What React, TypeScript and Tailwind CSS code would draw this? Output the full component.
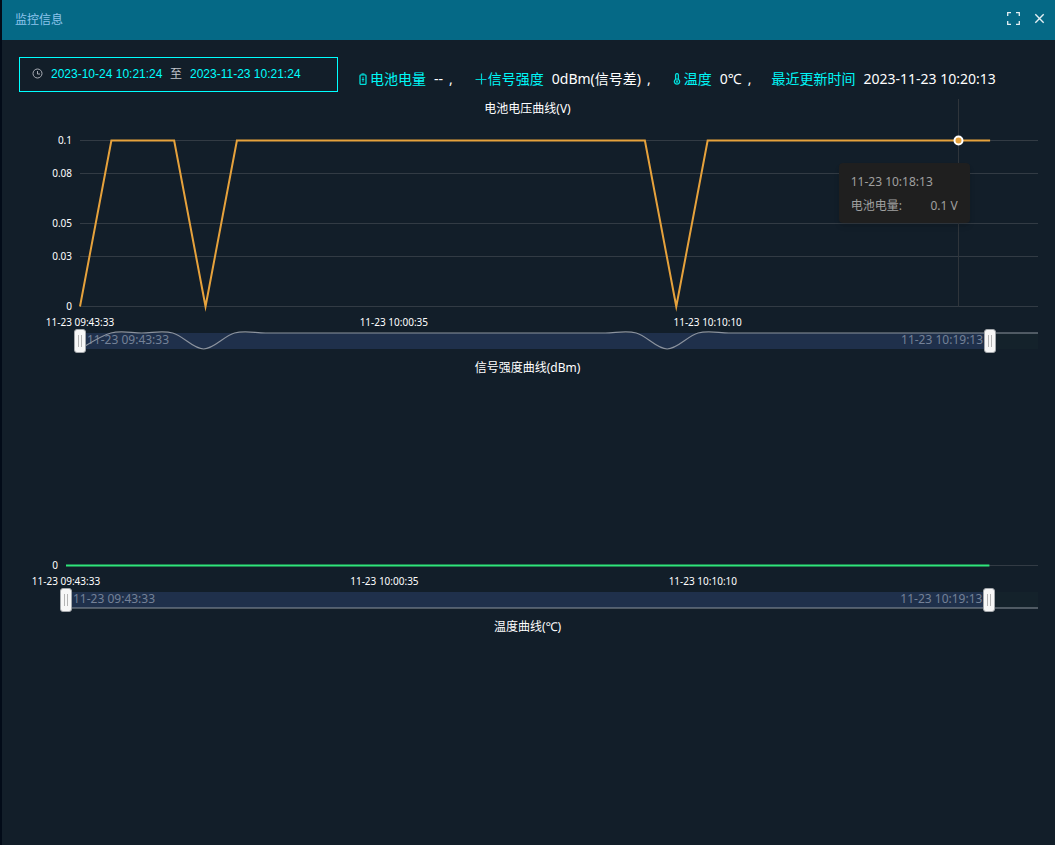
import { ReactNode, useEffect, useLayoutEffect, useRef, useState } from "react";
import clsx from "clsx";

interface ChartProps {
  title: string;
  color: string;
  values: number[];
  max: number;
  ticks: { value: number; label: string }[];
  gridLeft: number;
  hover?: { index: number; time: string; name: string; value: string };
}

const TOP = 21.5;
const BASE = 187.5;
const FONT = "font-['Noto_Sans','Noto_Sans_CJK_SC',sans-serif]";

const times: Record<number, string> = {
  0: "11-23 09:43:33",
  10: "11-23 10:00:35",
  20: "11-23 10:10:10",
};

const voltage = Array.from({ length: 32 }, (_, i) =>
  i === 0 || i === 4 || i === 19 ? 0 : 0.1,
);
const signal = Array.from({ length: 32 }, () => 0);

function smoothPath(points: [number, number][]) {
  return points.reduce((d, [x, y], i) => {
    if (i === 0) return `M${x} ${y}`;
    const [px, py] = points[i - 1];
    const before = points[i - 2] ?? points[i - 1];
    const after = points[i + 1] ?? points[i];
    const c1 = [px + (x - before[0]) / 6, py + (y - before[1]) / 6];
    const c2 = [x - (after[0] - px) / 6, y - (after[1] - py) / 6];
    return `${d} C${c1[0]} ${c1[1]} ${c2[0]} ${c2[1]} ${x} ${y}`;
  }, "");
}

function ZoomHandle({
  label,
  value,
  onChange,
}: {
  label: string;
  value: number;
  onChange: (value: number) => void;
}) {
  return (
    <input
      type="range"
      aria-label={label}
      min={0}
      max={100}
      value={value}
      onChange={(e) => onChange(Number(e.target.value))}
      className="pointer-events-none absolute inset-y-0 -left-1.5 h-6 w-[calc(100%+12px)] appearance-none bg-transparent outline-none [&::-webkit-slider-thumb]:pointer-events-auto [&::-webkit-slider-thumb]:h-6 [&::-webkit-slider-thumb]:w-3 [&::-webkit-slider-thumb]:cursor-ew-resize [&::-webkit-slider-thumb]:appearance-none [&::-webkit-slider-thumb]:rounded-[3px] [&::-webkit-slider-thumb]:border [&::-webkit-slider-thumb]:border-[#a3a7ab] [&::-webkit-slider-thumb]:bg-[#f7f7f7] [&::-webkit-slider-thumb]:bg-[linear-gradient(90deg,transparent_3px,#b4b4b4_3px,#b4b4b4_4px,transparent_4px,transparent_6px,#b4b4b4_6px,#b4b4b4_7px,transparent_7px)] [&::-webkit-slider-thumb]:bg-[length:10px_12px] [&::-webkit-slider-thumb]:bg-center [&::-webkit-slider-thumb]:bg-no-repeat"
    />
  );
}

function DataZoom({
  title,
  values,
  max,
  width,
}: {
  title: string;
  values: number[];
  max: number;
  width: number;
}) {
  const [start, setStart] = useState(0);
  const [end, setEnd] = useState(95);
  const points = values.map((v, i): [number, number] => [
    (i * width) / (values.length - 1),
    20 - (v / max) * 16,
  ]);

  return (
    <div className="relative h-6">
      <div className="absolute inset-x-0 top-1 h-4 bg-[#14222b]" />
      <div
        className="absolute top-1 flex h-4 items-center justify-between bg-[#1f304b] px-[7px] pb-0.5 text-xs leading-none text-[#748197]"
        style={{ left: `${start}%`, width: `${end - start}%` }}
      >
        <span>11-23 09:43:33</span>
        <span>11-23 10:19:13</span>
      </div>
      <svg className="absolute inset-0 h-6 w-full overflow-visible">
        <path
          d={smoothPath(points)}
          fill="none"
          stroke="#8c939e"
          strokeWidth="1.2"
        />
      </svg>
      <ZoomHandle
        label={`${title} 开始`}
        value={start}
        onChange={(v) => setStart(Math.min(v, end))}
      />
      <ZoomHandle
        label={`${title} 结束`}
        value={end}
        onChange={(v) => setEnd(Math.max(v, start))}
      />
    </div>
  );
}

function LineChart({
  title,
  color,
  values,
  max,
  ticks,
  gridLeft,
  hover,
}: ChartProps) {
  const ref = useRef<HTMLElement>(null);
  const [width, setWidth] = useState(0);

  useLayoutEffect(() => {
    if (ref.current) setWidth(ref.current.clientWidth);
  }, []);

  useEffect(() => {
    if (!ref.current) return;
    const observer = new ResizeObserver(([entry]) =>
      setWidth(entry.contentRect.width),
    );
    observer.observe(ref.current);
    return () => observer.disconnect();
  }, []);

  const plot = Math.max(width - gridLeft, 0);
  const x = (i: number) => gridLeft + (i * plot * 0.95) / 29;
  const y = (v: number) => BASE - (v / max) * (BASE - TOP);
  const line = values
    .slice(0, 30)
    .map((v, i) => `${x(i)},${y(v)}`)
    .join(" ");

  return (
    <section ref={ref} className="relative pb-[5px]">
      <h3 className="pr-0.5 text-center text-xs leading-5 text-white">
        {title}
      </h3>
      <svg className="block h-[210px] w-full overflow-visible">
        {ticks.map((t) => (
          <g key={t.value}>
            <line
              x1={gridLeft}
              x2={width}
              y1={Math.floor(y(t.value)) + 0.5}
              y2={Math.floor(y(t.value)) + 0.5}
              stroke="#323b44"
            />
            <text
              x={gridLeft - 8}
              y={y(t.value) + 3}
              textAnchor="end"
              className="fill-white text-[10px]"
            >
              {t.label}
            </text>
          </g>
        ))}
        {Object.entries(times).map(([i, label]) => (
          <text
            key={i}
            x={x(Number(i))}
            y={207}
            textAnchor="middle"
            className="fill-white text-[10px]"
          >
            {label}
          </text>
        ))}
        {hover && (
          <line
            x1={Math.floor(x(hover.index)) + 0.5}
            x2={Math.floor(x(hover.index)) + 0.5}
            y1={-20}
            y2={BASE}
            stroke="#2f353b"
          />
        )}
        <polyline
          points={line}
          fill="none"
          stroke={color}
          strokeWidth={2}
          strokeMiterlimit={10}
        />
        {hover && (
          <circle
            cx={Math.floor(x(hover.index)) + 0.5}
            cy={y(values[hover.index])}
            r={4}
            fill={color}
            stroke="#fff"
            strokeWidth={2}
          />
        )}
      </svg>
      <div style={{ marginLeft: gridLeft }}>
        <DataZoom title={title} values={values} max={max} width={plot} />
      </div>
      {hover && (
        <div
          className="absolute top-16 w-[131px] rounded-sm bg-[#1f1f1f] px-3 pt-[7px] pb-[5px] text-xs leading-6 text-[#a0a0a0] shadow-md"
          style={{ left: x(hover.index) - 120 }}
        >
          <div>{hover.time}</div>
          <div className="flex justify-between">
            <span>{hover.name}:</span>
            <span>{hover.value}</span>
          </div>
        </div>
      )}
    </section>
  );
}

function Stat({
  icon,
  label,
  children,
  last,
}: {
  icon?: ReactNode;
  label: string;
  children: ReactNode;
  last?: boolean;
}) {
  return (
    <div className="flex items-center whitespace-nowrap">
      {icon}
      <span className="text-[#00f7f7]">{label}</span>
      <span className={clsx("ml-2 text-white", !last && "mr-1.5")}>
        {children}
      </span>
      {!last && <span className="text-white">,</span>}
    </div>
  );
}

const batteryIcon = (
  <svg
    className="mr-[3px] ml-px h-3 w-2"
    viewBox="0 0 8 12"
    fill="none"
    stroke="#00e0dc"
  >
    <path d="M2.5 .9h3" />
    <rect x="1" y="1.8" width="6" height="9.6" rx="1" strokeWidth="1.3" />
    <path d="M4 4v5M2.8 6.5h2.4" strokeWidth=".9" />
  </svg>
);

const plusIcon = (
  <svg
    className="mr-px ml-0.5 h-3 w-3"
    viewBox="0 0 12 12"
    stroke="#00d0d0"
    strokeWidth="1.2"
  >
    <path d="M6.5 .5v11M.5 6.5h11" />
  </svg>
);

const thermometerIcon = (
  <svg
    className="mr-[3px] ml-0.5 h-3 w-2"
    viewBox="0 0 8 12"
    fill="none"
    stroke="#00e0dc"
  >
    <path
      d="M2.6 6.4V2a1.4 1.4 0 0 1 2.8 0v4.4a2.6 2.6 0 1 1-2.8 0z"
      strokeWidth="1.3"
    />
    <path d="M4 5v3.5" />
    <circle cx="4" cy="8.8" r=".6" fill="#00e0dc" />
  </svg>
);

function DateRange() {
  const [from, setFrom] = useState("2023-10-24 10:21:24");
  const [to, setTo] = useState("2023-11-23 10:21:24");
  const field =
    "w-[113px] bg-transparent text-xs text-[#00ffff] outline-none font-['Liberation_Sans',sans-serif]";

  return (
    <div className="flex h-[35px] w-[319px] shrink-0 items-center border border-[#0ff] pb-0.5 pl-3">
      <svg
        className="mr-2 h-[11px] w-[11px]"
        viewBox="0 0 11 11"
        fill="none"
        stroke="#a9adb5"
      >
        <circle cx="5.5" cy="5.5" r="4.5" />
        <path d="M5.5 3v3H8" />
      </svg>
      <input
        aria-label="开始时间"
        className={field}
        value={from}
        onChange={(e) => setFrom(e.target.value)}
      />
      <span className="mr-2 ml-1.5 text-xs text-[#c0c4cc]">至</span>
      <input
        aria-label="结束时间"
        className={field}
        value={to}
        onChange={(e) => setTo(e.target.value)}
      />
    </div>
  );
}

export default function App() {
  return (
    <div className={clsx("min-h-screen bg-[#020b18] pl-0.5", FONT)}>
      <div className="flex min-h-screen flex-col bg-[#121e29]">
        <header className="flex h-10 items-center justify-between bg-[#056986] pr-2.5 pl-[13px]">
          <h2 className="text-xs text-[#8cc4ec]">监控信息</h2>
          <div className="flex items-center gap-3.5 pb-1">
            <button type="button" aria-label="全屏">
              <svg
                className="h-[13px] w-[13px]"
                viewBox="0 0 13 13"
                fill="none"
                stroke="#e4eff3"
              >
                <path
                  d="M.7 4V.7H4M9 .7h3.3V4M12.3 9v3.3H9M4 12.3H.7V9"
                  strokeWidth="1.3"
                />
              </svg>
            </button>
            <button type="button" aria-label="关闭">
              <svg
                className="h-[11px] w-[11px]"
                viewBox="0 0 11 11"
                fill="none"
                stroke="#e4eff3"
              >
                <path d="M1.3 1.3l8.4 8.4M9.7 1.3l-8.4 8.4" strokeWidth="1.4" />
              </svg>
            </button>
          </div>
        </header>

        <main className="flex-1 px-[17px] pt-[17px]">
          <div className="mb-[7px] flex items-start gap-5">
            <DateRange />
            <div className="mt-3 flex gap-5 text-sm">
              <Stat icon={batteryIcon} label="电池电量">
                --
              </Stat>
              <Stat icon={plusIcon} label="信号强度">
                0dBm(信号差)
              </Stat>
              <Stat icon={thermometerIcon} label="温度">
                0℃
              </Stat>
              <Stat label="最近更新时间" last>
                2023-11-23 10:20:13
              </Stat>
            </div>
          </div>

          <LineChart
            title="电池电压曲线(V)"
            color="#e6a23c"
            values={voltage}
            max={0.1}
            gridLeft={61}
            ticks={[
              { value: 0, label: "0" },
              { value: 0.03, label: "0.03" },
              { value: 0.05, label: "0.05" },
              { value: 0.08, label: "0.08" },
              { value: 0.1, label: "0.1" },
            ]}
            hover={{
              index: 28,
              time: "11-23 10:18:13",
              name: "电池电量",
              value: "0.1 V",
            }}
          />
          <LineChart
            title="信号强度曲线(dBm)"
            color="#2fe57a"
            values={signal}
            max={1}
            gridLeft={47}
            ticks={[{ value: 0, label: "0" }]}
          />
          <h3 className="pr-0.5 text-center text-xs leading-5 text-white">
            温度曲线(℃)
          </h3>
        </main>
      </div>
    </div>
  );
}
